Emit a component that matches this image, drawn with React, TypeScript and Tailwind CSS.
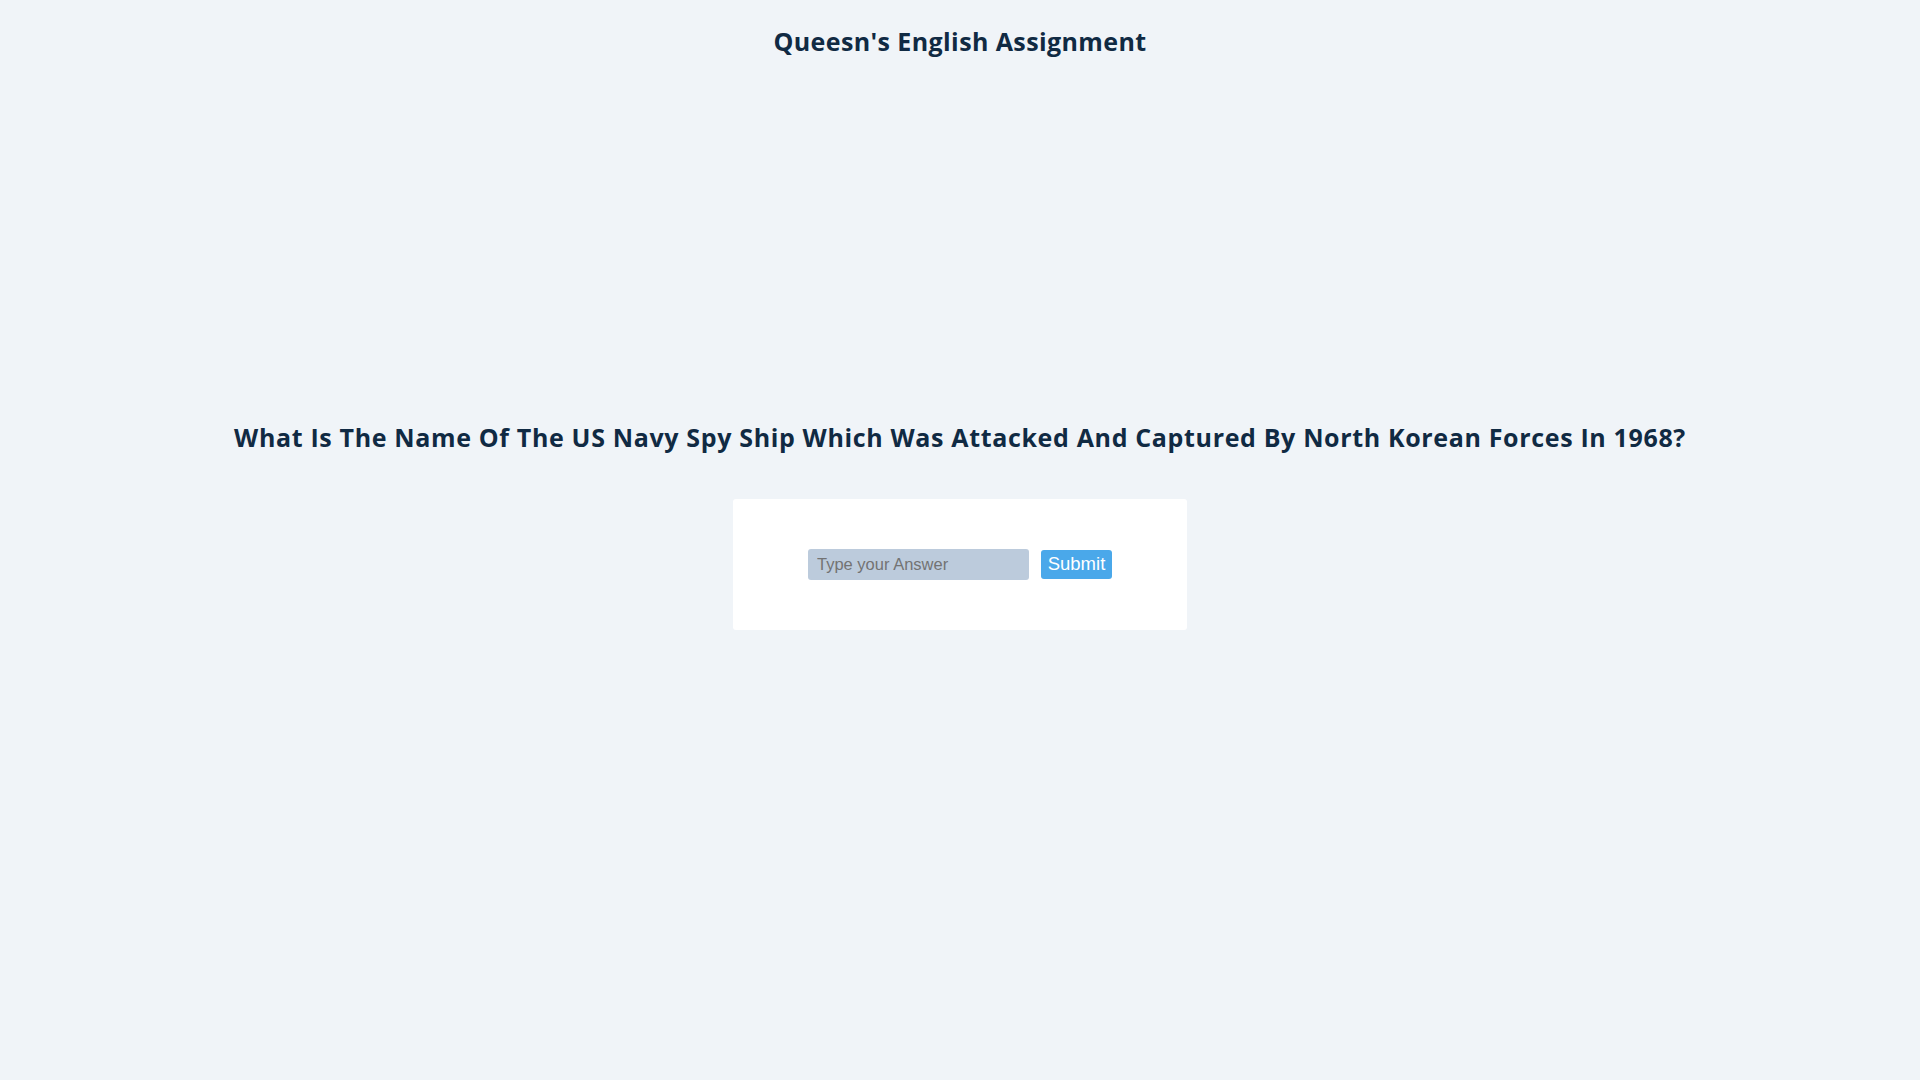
export default function App() {
  return (
    <div className="min-h-screen bg-[#f0f4f8] text-[#102a43]" style={{ fontFamily: '"Open Sans", "Noto Sans", sans-serif' }}>
      <header className="pt-[23px] text-center">
        <h1 className="text-[25px] font-bold leading-[36px] tracking-[0.4px]">Queesn's English Assignment</h1>
      </header>

      <main className="mt-[358px] flex flex-col items-center">
        <h2 className="text-[25px] font-bold leading-[40px] tracking-[0.65px]">
          What Is The Name Of The US Navy Spy Ship Which Was Attacked And Captured By North Korean Forces In 1968?
        </h2>

        <form
          className="mt-[42px] flex h-[131px] w-[454px] items-center justify-center gap-[12px] rounded-[3px] bg-white"
          onSubmit={(e) => e.preventDefault()}
        >
          <input
            type="text"
            placeholder="Type your Answer"
            className="h-[31px] w-[221px] rounded-[3px] bg-[#bccbdc] px-[9px] text-[16.5px] text-[#334e68] placeholder:text-[#737373] outline-none"
            style={{ fontFamily: '"Liberation Sans", Arial, sans-serif' }}
          />
          <button
            type="submit"
            className="h-[29px] w-[71px] rounded-[3px] bg-[#4aa8ea] text-[18.5px] leading-none text-white"
            style={{ fontFamily: '"Liberation Sans", Arial, sans-serif' }}
          >
            Submit
          </button>
        </form>
      </main>
    </div>
  );
}
